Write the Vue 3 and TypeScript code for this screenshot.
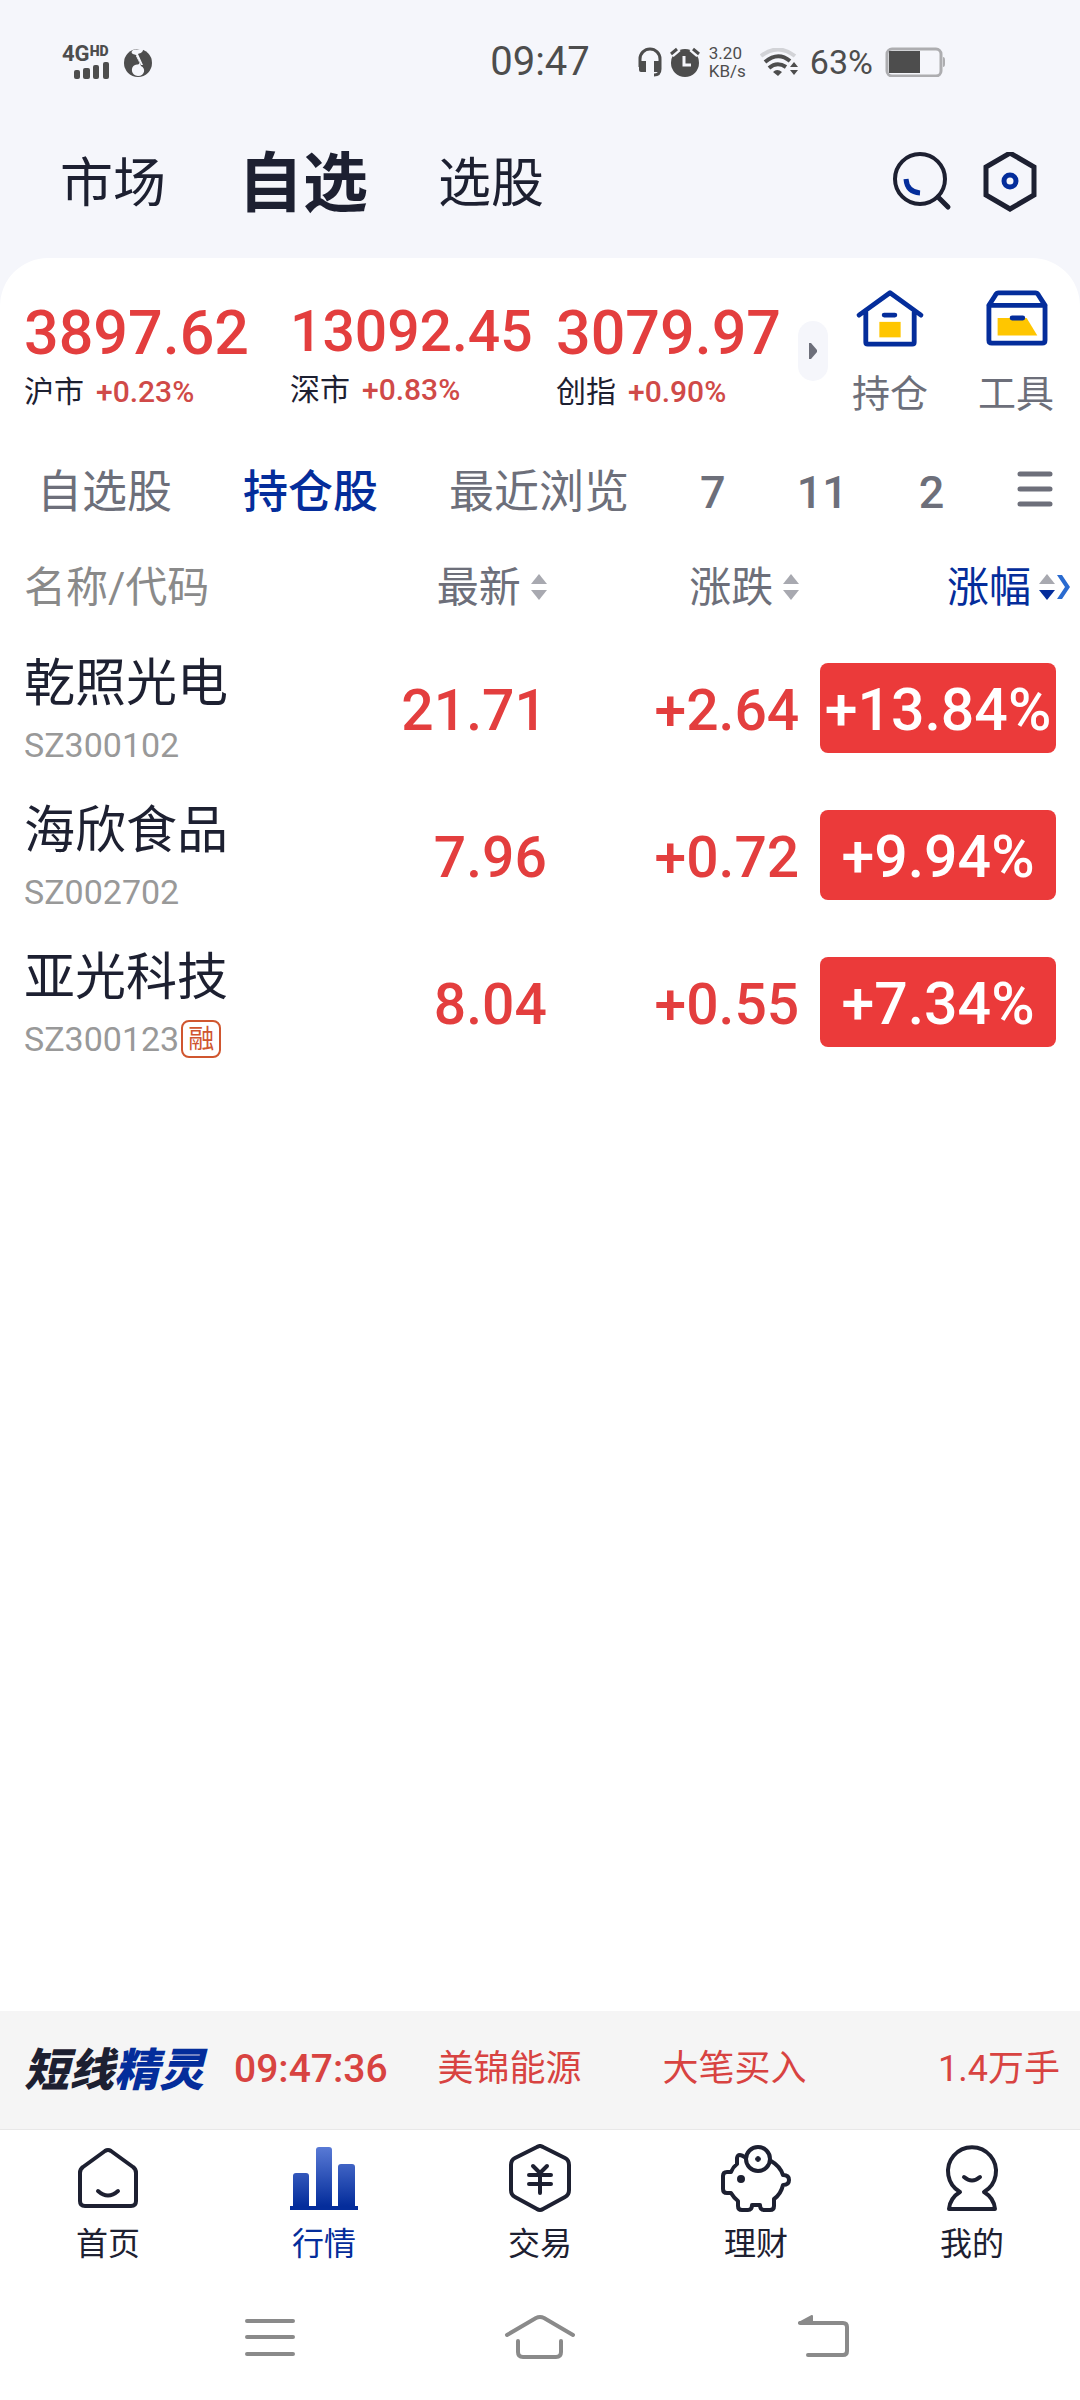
<script setup lang="ts">
interface Index { name: string; value: string; change: string; compact?: boolean }
interface Stock { name: string; code: string; price: string; change: string; pct: string; margin?: boolean }

const indices: Index[] = [
  { name: '沪市', value: '3897.62', change: '+0.23%' },
  { name: '深市', value: '13092.45', change: '+0.83%', compact: true },
  { name: '创指', value: '3079.97', change: '+0.90%' },
]
const stocks: Stock[] = [
  { name: '乾照光电', code: 'SZ300102', price: '21.71', change: '+2.64', pct: '+13.84%' },
  { name: '海欣食品', code: 'SZ002702', price: '7.96', change: '+0.72', pct: '+9.94%' },
  { name: '亚光科技', code: 'SZ300123', price: '8.04', change: '+0.55', pct: '+7.34%', margin: true },
]
const groups = ['自选股', '持仓股', '最近浏览', '7', '11', '2']
const sortable = ['最新', '涨跌', '涨幅']
</script>

<template>
  <div class="app">
    <header class="status">
      <div class="side left">
        <div class="signal">
          <span class="net">4G<sup>HD</sup></span>
          <svg width="35" height="17" viewBox="0 0 35 17" fill="#4d4d4d">
            <rect x="0" y="8" width="6" height="9" rx="2" /><rect x="9" y="6" width="7" height="11" rx="2" />
            <rect x="19" y="3" width="6" height="14" rx="2" /><rect x="29" y="0" width="6" height="17" rx="2" />
          </svg>
        </div>
        <svg width="30" height="30" viewBox="0 0 30 30">
          <circle cx="15" cy="16" r="14" fill="#4d4d4d" />
          <path d="M9 4C11 1 16 4 20 0C21 5 18 6 15 7L20 18H18L13 8C9 7 8 6 9 4Z" fill="#f5f6fb" />
          <path d="M14 9L18 19C23 21 22 29 15 29C8 29 7 20 12 18C15 17 17 18 16 15L13 9Z" fill="#f5f6fb" />
        </svg>
      </div>
      <time class="clock">09:47</time>
      <div class="side right">
        <svg width="24" height="30" viewBox="0 0 24 30" fill="none" stroke="#4d4d4d">
          <path d="M2 20V12a10 10 0 0 1 20 0V22q0 6-6 6" stroke-width="3" />
          <path d="M1 14h7v11H3q-2 0-2-2zM16 14h7v9q0 2-2 2h-5z" fill="#4d4d4d" stroke="none" />
        </svg>
        <svg class="alarm" width="30" height="30" viewBox="0 0 30 30" fill="none" stroke="#4d4d4d" stroke-width="3">
          <circle cx="15" cy="16" r="14" fill="#4d4d4d" stroke="none" />
          <path d="M1 7l7-6M29 7l-7-6" stroke="#f5f6fb" stroke-width="8" /><path d="M1 7l6-5M29 7l-6-5" />
          <path d="M14 9v9h7" stroke="#f5f6fb" />
        </svg>
        <div class="speed"><span>3.20</span><span>KB/s</span></div>
        <svg class="wifi" width="38" height="28" viewBox="0 0 38 28" fill="none" stroke="#4d4d4d" stroke-width="4">
          <path d="M1 8Q18-5 35 8" stroke="#d2d3d7" />
          <path d="M5 14Q18 3 30 13M9 20Q17 13 26 19" />
          <path d="M13 24q4-4 9 0l-4 4zM30 19l4-5 4 5zM30 22h8l-4 5z" fill="#4d4d4d" stroke="none" />
        </svg>
        <span class="percent">63%</span>
        <svg width="61" height="30" viewBox="0 0 61 30">
          <rect x="2" y="2" width="54" height="27" rx="5" fill="none" stroke="#adadb0" stroke-width="3" />
          <rect x="4" y="4" width="31" height="22" fill="#4d4d4d" /><path d="M58 10q2 0 2 3v4q0 3-2 3z" fill="#adadb0" />
        </svg>
      </div>
    </header>

    <nav class="top">
      <button class="top-tab">市场</button>
      <button class="top-tab on">自选</button>
      <button class="top-tab">选股</button>
      <span class="grow"></span>
      <button class="icon" aria-label="搜索">
        <svg width="60" height="64" viewBox="0 4 60 64" fill="none" stroke="#1d2031" stroke-width="5" stroke-linecap="round">
          <circle cx="28" cy="31" r="25" stroke-width="4" /><path d="M46 49l10 10" />
          <path d="M14 31q1 13 14 14" stroke="#042d9b" stroke-linecap="butt" />
        </svg>
      </button>
      <button class="icon" aria-label="设置">
        <svg width="56" height="64" viewBox="0 3 56 64" fill="none" stroke="#1d2031" stroke-width="5">
          <path d="M28 4L52 18V46L28 60L4 46V18Z" /><circle cx="28" cy="32" r="6" stroke="#042d9b" />
        </svg>
      </button>
    </nav>

    <main class="card">
      <section class="summary">
        <div class="indices">
          <a v-for="i in indices" :key="i.name" href="#" class="index">
            <strong :class="{ compact: i.compact }">{{ i.value }}</strong>
            <span class="index-sub">{{ i.name }}<em>{{ i.change }}</em></span>
          </a>
        </div>
        <button class="pill" aria-label="更多指数">
          <svg width="10" height="16" viewBox="0 0 10 16"><path d="M1 0h2l6 7v2l-6 7H1z" fill="#6d6f7a" /></svg>
        </button>
        <button class="tool">
          <svg width="70" height="60" viewBox="-1 -1 72 62" fill="none" stroke="#042d9b" stroke-width="5" stroke-linecap="round" stroke-linejoin="round">
            <path d="M3 27L35 4L67 27M10 24V55q0 2 2 2H58q2 0 2-2V24" />
            <path d="M24 34h22v16h-22z" fill="#ffc600" stroke="none" /><path d="M29 27h11" />
          </svg>
          持仓
        </button>
        <button class="tool">
          <svg width="70" height="60" viewBox="-2 -1 72 62" fill="none" stroke="#042d9b" stroke-width="5" stroke-linecap="round" stroke-linejoin="round">
            <path d="M15 30h30l11 18H15z" fill="#ffc600" stroke="none" />
            <path d="M6 17V53q0 3 3 3H61q3 0 3-3V17zM6 17L13 6q1-2 3-2H54q2 0 3 2L64 17" /><path d="M30 30h11" />
          </svg>
          工具
        </button>
      </section>

      <nav class="groups">
        <button v-for="(g, n) in groups" :key="g" class="group" :class="{ on: n === 1, digit: n > 2 }">{{ g }}</button>
        <span class="grow"></span>
        <button class="menu" aria-label="分组管理">
          <svg width="36" height="44" viewBox="0 0 36 44" stroke="#6d6f7a" stroke-width="5" stroke-linecap="round"><path d="M3 4H33M3 19H33M3 34H33" /></svg>
        </button>
      </nav>

      <table class="quotes">
        <colgroup><col class="c-name"><col class="c-price"><col class="c-change"><col></colgroup>
        <thead>
          <tr>
            <th class="name-col">名称/代码</th>
            <th v-for="(s, n) in sortable" :key="s" :class="{ active: n === 2 }">
              <button class="sort">{{ s }}
                <svg class="arrows" width="16" height="28" viewBox="0 0 16 28"><path d="M8 0l8 10H0z" fill="#a8a9b0" /><path d="M8 26l8-10H0z" :fill="n === 2 ? '#042d9b' : '#a8a9b0'" /></svg>
                <svg v-if="n === 2" width="16" height="28" viewBox="0 0 16 28"><path d="M2 1h5l8 12-8 12H2l8-12z" fill="#2a6bd0" /></svg>
              </button>
            </th>
          </tr>
        </thead>
        <tbody>
          <tr v-for="s in stocks" :key="s.code">
            <td class="name-col">
              <div class="name">{{ s.name }}</div>
              <div class="code">{{ s.code }}<span v-if="s.margin" class="tag">融</span></div>
            </td>
            <td class="num">{{ s.price }}</td>
            <td class="num">{{ s.change }}</td>
            <td><span class="badge">{{ s.pct }}</span></td>
          </tr>
        </tbody>
      </table>
    </main>

    <a href="#" class="ticker">
      <span class="brand">短线<b>精灵</b></span>
      <time>09:47:36</time>
      <span class="t-name">美锦能源</span>
      <span class="t-act">大笔买入</span>
      <span class="t-vol">1.4万手</span>
    </a>

    <nav class="bottom">
      <a href="#">
        <svg width="72" height="72" viewBox="0 0 72 72" class="line">
          <path d="M33 7q3-2 6 0L61 23q3 2 3 6V57q0 5-5 5H13q-5 0-5-5V29q0-4 3-6ZM26 47q10 9 20 0" />
        </svg>首页
      </a>
      <a href="#" class="on">
        <svg width="72" height="72" viewBox="0 0 72 72">
          <defs><linearGradient id="bars" gradientUnits="userSpaceOnUse" x1="0" y1="2" x2="0" y2="62"><stop offset="0" stop-color="#5a7bd6" /><stop offset="1" stop-color="#042d9b" /></linearGradient></defs>
          <path d="M5 64V32q0-3 3-3H18q3 0 3 3V64zM28 64V6q0-3 3-3H41q3 0 3 3V64zM50 64V23q0-3 3-3H64q3 0 3 3V64z" fill="url(#bars)" />
          <path d="M2 62H70v4H2z" fill="#042d9b" />
        </svg>行情
      </a>
      <a href="#">
        <svg width="72" height="72" viewBox="0 0 72 72" class="line">
          <path d="M33 3q3-2 6 0L61 14q4 2 4 7V46q0 5-4 7L39 65q-3 2-6 0L11 53q-4-2-4-7V21q0-5 4-7Z" />
          <path d="M29 22l7 7 7-7M25 31H47M25 40H47M36 30V49" />
        </svg>交易
      </a>
      <a href="#">
        <svg width="72" height="72" viewBox="0 0 72 72" class="line">
          <circle cx="38" cy="15" r="12" /><path d="M38 14v2M37 15h2" /><circle cx="21" cy="35" r="3" fill="#1d2031" stroke-width="2" />
          <path d="M26 14q-8-6-9 0v6q-4 3-6 8H7q-4 0-4 4V45q0 4 4 4h4q3 5 7 8v5q0 4 4 4h6q4 0 4-5h8q0 5 4 5h6q4 0 4-4V55q7-5 9-14 6 0 6-5t-6-5q-3-9-12-14" />
        </svg>理财
      </a>
      <a href="#">
        <svg width="72" height="72" viewBox="0 0 72 72" class="line">
          <path d="M24 48A24 24 0 1 1 48 48Q58 54 59 65H13Q14 54 24 48ZM28 33q8 7 16 0" />
        </svg>我的
      </a>
    </nav>

    <nav class="system">
      <button aria-label="最近任务"><svg width="72" height="46" viewBox="0 0 72 46" class="sys"><path d="M13 7H59M13 23H59M13 40H59" /></svg></button>
      <button aria-label="主屏幕"><svg width="72" height="46" viewBox="0 0 72 46" class="sys"><path d="M3 21L32 4q4-2 8 0L69 21M14 27V38q0 5 5 5H52q5 0 5-5V27" /></svg></button>
      <button aria-label="返回"><svg width="86" height="46" viewBox="-14 0 86 46" class="sys"><path d="M12 9H55q4 0 4 4V37q0 4-4 4H20" /><path d="M11 9L24 2V9z" fill="#8a8a8a" stroke-width="2" /></svg></button>
    </nav>
  </div>
</template>

<style>
body { margin: 0; background: #f5f6fb; }
</style>

<style scoped>
.app { min-height: 100vh; display: flex; flex-direction: column; background: #f5f6fb; color: #1d2031; font-family: Roboto, "Noto Sans CJK SC", sans-serif; }
button { border: 0; padding: 0; background: none; font: inherit; color: inherit; cursor: pointer; display: flex; align-items: center; white-space: nowrap; }
a { color: inherit; text-decoration: none; }
svg { display: block; flex: none; }
.grow { flex: 1; }

.status { height: 124px; display: flex; align-items: center; color: #4d4d4d; }
.side { flex: 1 1 0; display: flex; align-items: center; }
.left { padding-left: 62px; gap: 14px; }
.right { padding: 0 14px 0 48px; }
.signal { display: flex; flex-direction: column; align-items: flex-end; }
.net { font-size: 22px; font-weight: 700; line-height: 16px; display: flex; }
.net sup { font-size: 14px; line-height: 10px; font-weight: 900; }
.clock { font-size: 40px; line-height: 48px; }
.alarm { margin-left: 8px; }
.speed { display: flex; flex-direction: column; margin-left: 9px; font-size: 17px; line-height: 18px; }
.wifi { margin-left: 14px; }
.percent { font-size: 34px; line-height: 40px; margin: 0 12px; }

.top { height: 134px; display: flex; align-items: center; padding: 0 42px 14px 60px; box-sizing: border-box; }
.top-tab { font-size: 53px; line-height: 80px; margin-right: 72px; }
.top-tab.on { font-size: 65px; font-weight: 700; margin-right: 70px; }
.icon + .icon { margin-left: 30px; }

.card { flex: 1; background: #fff; border-radius: 48px 48px 0 0; }
.summary { display: flex; align-items: flex-start; padding: 28px 24px 0; }
.indices { flex: 1; display: grid; grid-template-columns: 266px 266px 1fr; align-items: start; }
.index { display: flex; flex-direction: column; }
.index strong { padding-top: 6px; font-size: 61px; font-weight: 500; line-height: 82px; color: #e33e3e; }
.index strong.compact { font-size: 57px; line-height: 80px; }
.index-sub { font-size: 30px; line-height: 36px; }
.index em { font-style: normal; font-weight: 500; color: #d04a48; margin-left: 12px; }
.pill { width: 30px; height: 60px; border-radius: 15px; background: #f5f6fb; justify-content: center; margin: 35px 22px 0 0; }
.tool { flex-direction: column; width: 80px; padding-top: 2px; font-size: 38px; line-height: 44px; gap: 24px; color: #6d6f7a; }
.tool + .tool { margin-left: 46px; }

.groups { display: flex; align-items: center; padding: 46px 27px 0 37px; height: 60px; color: #6d6f7a; }
.group { font-size: 45px; line-height: 60px; margin-right: 71px; padding-top: 2px; }
.group:nth-of-type(6) { margin-right: 0; }
.group.on { color: #042d9b; font-weight: 500; }
.group.digit { font-weight: 500; }

.quotes { width: 100%; border-collapse: collapse; table-layout: fixed; margin-top: 20px; }
.c-name { width: 26%; }
.c-price { width: 25%; }
.c-change { width: 23%; }
th, td { padding: 0; text-align: right; box-sizing: border-box; }
th { font-size: 42px; font-weight: 400; line-height: 60px; height: 92px; color: #6d6f7a; }
th.name-col { color: #8a8a8a; }
.name-col { text-align: left; padding-left: 24px; }
th:nth-child(2), td:nth-child(2) { padding-right: 4px; }
.sort { margin-left: auto; }
.arrows { margin-left: 10px; }
.active .sort { color: #042d9b; margin-right: 9px; }
.active .arrows { margin-left: 8px; }
td { height: 147px; }
.name { font-size: 51px; line-height: 64px; }
.code { display: flex; align-items: center; height: 36px; margin-top: 11px; font-size: 34px; line-height: 36px; color: #999; }
.tag { border: 2px solid #d0562f; border-radius: 8px; color: #d0562f; font-size: 26px; line-height: 34px; padding: 0 5px; margin-left: 2px; }
.num { padding-top: 6px; font-size: 57px; font-weight: 500; color: #e33e3e; }
.badge { display: block; box-sizing: border-box; width: 236px; margin: 0 24px 0 auto; height: 90px; padding-top: 4px; line-height: 86px; border-radius: 8px; background: #eb3a3a; color: #fff; font-size: 59px; font-weight: 500; text-align: center; }

.ticker { display: flex; align-items: center; height: 119px; box-sizing: border-box; padding: 0 20px 2px 24px; background: #f5f5f5; border-bottom: 1px solid #e8e8e8; color: #d84341; font-size: 36px; line-height: 48px; }
.brand { padding-top: 4px; font-size: 45px; font-weight: 900; font-style: italic; color: #1d2031; }
.brand b { color: #042d9b; font-weight: 900; }
.ticker time { font-size: 39px; font-weight: 500; margin-left: 30px; }
.t-name { margin-left: 50px; }
.t-act { margin-left: 81px; }
.t-vol { margin-left: auto; }

.bottom { display: flex; background: #fff; padding-top: 14px; }
.bottom a { flex: 1; display: flex; flex-direction: column; align-items: center; gap: 4px; font-size: 32px; line-height: 48px; }
.bottom a.on { color: #042d9b; }
.line { fill: none; stroke: #1d2031; stroke-width: 4; stroke-linecap: round; stroke-linejoin: round; }
.system { display: flex; justify-content: center; gap: 198px; background: #fff; padding: 46px 0 40px 14px; }
.sys { fill: none; stroke: #8a8a8a; stroke-width: 4; stroke-linecap: round; stroke-linejoin: round; }
</style>
